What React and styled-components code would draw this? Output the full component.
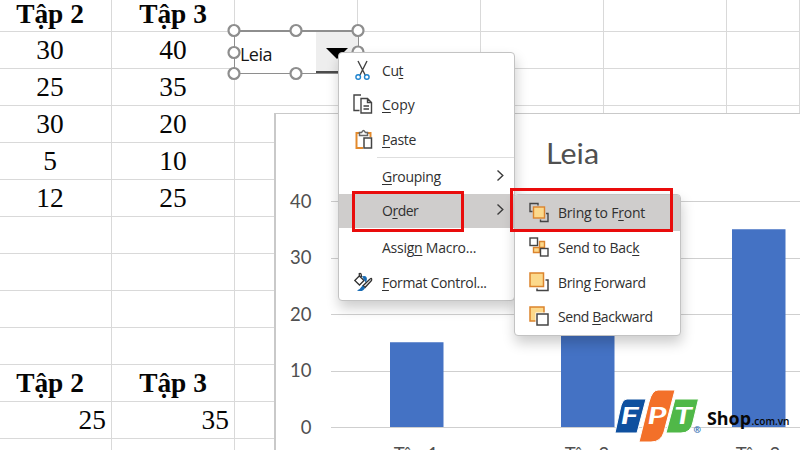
import React from "react";
import styled, { createGlobalStyle } from "styled-components";

const GlobalStyle = createGlobalStyle`
  body { margin: 0; background: #fff; overflow: hidden; }
  * { box-sizing: border-box; }
`;

const Screen = styled.main`
  position: relative;
  width: 800px;
  height: 450px;
  overflow: hidden;
  background: #fff;
`;

const Sheet = styled.div`
  display: grid;
  grid-template-columns: 112px repeat(5, 123px) 73px;
  grid-template-rows: 32px;
  grid-auto-rows: 37px;
`;

const Cell = styled.div`
  display: flex;
  align-items: center;
  justify-content: ${(p) => (p.$align === "right" ? "flex-end" : "center")};
  padding-right: ${(p) => p.$inset}px;
  padding-bottom: ${(p) => p.$lift}px;
  border-right: 1px solid #d9d9d9;
  border-bottom: 1px solid #d9d9d9;
  font-family: "Liberation Serif", serif;
  font-size: 27.4px;
  line-height: 27px;
  font-weight: ${(p) => (p.$bold ? 700 : 400)};
  color: #050505;
`;

const ComboBox = styled.div`
  position: absolute;
  left: 234px;
  top: 30px;
  width: 125px;
  height: 44px;
  display: flex;
  background: #fff;
  border: 1px solid #8e8e8e;
  border-top-width: 2px;
`;

const ComboValue = styled.span`
  flex: 1;
  padding-left: 5px;
  font: 18px/45px "Open Sans", sans-serif;
  letter-spacing: -0.55px;
  color: #161616;
`;

const ComboButton = styled.span`
  display: flex;
  width: 42px;
  justify-content: center;
  background: #eee;
  border-bottom: 2px solid #4c4c4c;
  svg { margin-top: 16px; }
`;

const Handles = styled.svg`
  position: absolute;
  left: 226px;
  top: 22px;
`;

const ChartFrame = styled.section`
  position: absolute;
  left: 274px;
  top: 113px;
  width: 540px;
  height: 350px;
  background: #fff;
  border: 1px solid #c9c9c9;
  border-width: 1px 0 0 2px;
  svg { display: block; }
`;

const Menu = styled.nav`
  position: absolute;
  left: ${(p) => p.$x}px;
  top: ${(p) => p.$y}px;
  width: ${(p) => p.$w}px;
  height: ${(p) => p.$h}px;
  display: flex;
  flex-direction: column;
  padding-top: ${(p) => p.$pad}px;
  background: #fff;
  border: 1px solid #c3c3c3;
  border-radius: 4px;
  overflow: hidden;
  box-shadow: 1px 7px 13px rgba(0, 0, 0, 0.2);
`;

const MenuItem = styled.div`
  display: grid;
  grid-template-columns: 43px 1fr 18px;
  align-items: center;
  flex: 0 0 ${(p) => p.$h}px;
  background: ${(p) => (p.$active ? "#cfcdcc" : "transparent")};
`;

const IconSlot = styled.span`
  display: flex;
  padding-left: 14px;
`;

const Label = styled.span`
  font: 14px/20px "Open Sans", sans-serif;
  letter-spacing: ${(p) => p.$track || 0}px;
  color: #303030;
  white-space: nowrap;
  u {
    text-decoration-thickness: 1px;
    text-underline-offset: 2px;
  }
`;

const Divider = styled.hr`
  flex: 0 0 1px;
  margin: 0 0 1px 38px;
  border: 0;
  background: #dedede;
`;

const Callout = styled.div`
  position: absolute;
  left: ${(p) => p.$x}px;
  top: ${(p) => p.$y}px;
  width: ${(p) => p.$w}px;
  height: ${(p) => p.$h}px;
  border: 3px solid #e90c0c;
`;

const Watermark = styled.svg`
  position: absolute;
  left: 610px;
  top: 385px;
`;

const CutIcon = () => (
  <svg width="22" height="22" fill="none" strokeWidth="1.4">
    <path d="M5 1 12.2 15M14 1 7 15" stroke="#444" />
    <circle cx="5.2" cy="17" r="2.3" stroke="#1f84cf" />
    <circle cx="13.8" cy="17" r="2.3" stroke="#1f84cf" />
  </svg>
);
const CopyIcon = () => (
  <svg width="22" height="22" fill="none" stroke="#444" strokeWidth="1.4">
    <path d="M6.5 16.5H1V1H8" />
    <path d="M8 4.5H14.5L18.5 8.5V19H8ZM14.5 4.5V8.5H18.5M10.5 12H16M10.5 15H16" />
  </svg>
);
const PasteIcon = () => (
  <svg width="22" height="22" fill="none" strokeWidth="1.5">
    <path d="M8 4H3.5V19H10M14 4H17.5V8" stroke="#e38a2d" strokeWidth="2" />
    <path d="M6.5 6.5V3.5H8.6Q10.5-.7 12.4 3.5H14.5V6.5Z" stroke="#666" fill="#fff" />
    <path d="M11 9H18.5V19H11Z" stroke="#444" fill="#fff" />
  </svg>
);
const FormatIcon = () => (
  <svg width="22" height="22" fill="none" strokeWidth="1.3">
    <path d="M7 3.2 1.8 8.5 6.5 13 11 8.5 6.3 4V1.5Q8.5.5 8.5 5" stroke="#333" />
    <path d="M10 4.8Q14.5 4 12.8 9.5L11.5 7.5Z" fill="#186bb4" stroke="#186bb4" />
    <path d="M18.5 8.5 12 15.5 10 13.8 16.5 7.5Q19.5 5 18.5 8.5Z" stroke="#333" fill="#eee" />
    <path d="M9.5 13.5 12 16Q10 20.5 4 18.5 7 17.5 9.5 13.5Z" fill="#186bb4" />
  </svg>
);
const paper = { fill: "#fcd98b", stroke: "#dc842d" };
const outline = { fill: "#fff", stroke: "#444" };
const FrontIcon = () => (
  <svg width="22" height="22" strokeWidth="1.4">
    <path d="M9 3.5V1.5H1V9.5H3.5M11.5 17.5V19.5H19V11.5H17" {...outline} fill="none" />
    <rect x="4.5" y="5" width="11" height="11" {...paper} />
  </svg>
);
const BackIcon = () => (
  <svg width="22" height="22" strokeWidth="1.4">
    <path d="M10.5 4.5H15.5V10.5H10.5V15.5H4.5V10.5H10.5Z" {...paper} />
    <rect x="1" y="1" width="7.5" height="7.5" {...outline} />
    <rect x="11.5" y="11.5" width="7.5" height="7.5" {...outline} />
  </svg>
);
const ForwardIcon = () => (
  <svg width="22" height="22" strokeWidth="1.5">
    <rect x="1" y="1" width="13.5" height="13.5" {...paper} />
    <path d="M8 16.5V18.5H19V8H16.5" {...outline} fill="none" />
  </svg>
);
const BackwardIcon = () => (
  <svg width="22" height="22" strokeWidth="1.5">
    <rect x="1" y="1" width="14" height="14" {...paper} />
    <rect x="6.5" y="6.5" width="14" height="14" fill="#fff" />
    <rect x="8" y="8" width="11" height="11" {...outline} />
  </svg>
);
const Chevron = () => (
  <svg width="9" height="14" fill="none" stroke="#3c3c3c" strokeWidth="1.4">
    <path d="M1.5 .5 6.8 5.5 1.5 10.5" />
  </svg>
);

const ROWS = [
  ["Tập 2", "Tập 3"],
  ["30", "40"],
  ["25", "35"],
  ["30", "20"],
  ["5", "10"],
  ["12", "25"],
  ["", ""],
  ["", ""],
  ["", ""],
  ["", ""],
  ["Tập 2", "Tập 3"],
  ["25", "35"],
  ["", ""],
];

const CONTEXT_ITEMS = [
  { pre: "Cu", key: "t", post: "", Icon: CutIcon, h: 34, track: -0.4 },
  { pre: "", key: "C", post: "opy", Icon: CopyIcon, h: 34, track: 0 },
  { pre: "", key: "P", post: "aste", Icon: PasteIcon, h: 35, track: -0.35 },
  { pre: "", key: "G", post: "rouping", h: 35, track: -0.3, more: true, ruled: true },
  { pre: "O", key: "r", post: "der", h: 34, track: -0.5, more: true, active: true },
  { pre: "Assig", key: "n", post: " Macro...", h: 39, track: -0.25 },
  { pre: "", key: "F", post: "ormat Control...", Icon: FormatIcon, h: 31, track: -0.33 },
];

const ORDER_ITEMS = [
  { pre: "Bring to F", key: "r", post: "ont", Icon: FrontIcon, h: 36, track: -0.22, active: true },
  { pre: "Send to Bac", key: "k", post: "", Icon: BackIcon, h: 34, track: -0.25 },
  { pre: "Bring ", key: "F", post: "orward", Icon: ForwardIcon, h: 35, track: -0.36 },
  { pre: "Send ", key: "B", post: "ackward", Icon: BackwardIcon, h: 34, track: -0.42 },
];

const Items = ({ items }) =>
  items.map(({ pre, key, post, Icon, h, track, more, active, ruled }) => (
    <React.Fragment key={pre + key + post}>
      {ruled && <Divider />}
      <MenuItem $h={h} $active={active}>
        <IconSlot>{Icon && <Icon />}</IconSlot>
        <Label $track={track}>
          {pre}
          <u>{key}</u>
          {post}
        </Label>
        {more && <Chevron />}
      </MenuItem>
    </React.Fragment>
  ));

const Chart = () => (
  <ChartFrame>
    <svg width="524" height="336" viewBox="276 114 524 336" fontFamily="Lato, sans-serif" fill="#505050">
      <text x="546" y="163.5" fontSize="29.5" textLength="53" lengthAdjust="spacingAndGlyphs">Leia</text>
      {[40, 30, 20, 10, 0].map((v) => {
        const y = 427.5 - v * 5.65;
        return (
          <g key={v}>
            <path d={`M331 ${Math.floor(y) + 0.5}H800`} stroke="#cfcfcf" />
            <text x="311.5" y={y + 6} fontSize="18.5" textAnchor="end">{v}</text>
          </g>
        );
      })}
      {[15, 30, 35].map((v, i) => (
        <g key={i}>
          <rect x={390 + i * 171} y={427 - v * 5.65} width="53.5" height={v * 5.65} fill="#4472c4" />
          <text x={416 + i * 171} y="461" fontSize="18.5" textAnchor="middle">{`Tập ${i + 1}`}</text>
        </g>
      ))}
    </svg>
  </ChartFrame>
);

const Logo = () => (
  <Watermark width="190" height="65" viewBox="610 385 190 65">
    <path d="M627 399H646L637 433H615L620 410Q622 399 627 399Z" fill="#0f509f" stroke="#fff" />
    <path d="M675 399H698.5L693 422Q691 433 681 433H666Z" fill="#50b848" stroke="#fff" />
    <path d="M658 390H675L664 432Q661 442 651 442H639L649 402Q652 390 658 390Z" fill="#f37029" stroke="#fff" />
    <g fill="#fff" fontFamily="Lato, sans-serif" fontWeight="700" fontStyle="italic" fontSize="22">
      <text x="620.5" y="424" textLength="18" lengthAdjust="spacingAndGlyphs">F</text>
      <text x="647.5" y="424" textLength="19" lengthAdjust="spacingAndGlyphs">P</text>
      <text x="674" y="424" textLength="18" lengthAdjust="spacingAndGlyphs">T</text>
    </g>
    <text x="693.5" y="433" fontFamily="Open Sans, sans-serif" fontWeight="700" fontSize="9" fill="#2768ad">®</text>
    <text x="707" y="425" fontFamily="Open Sans, sans-serif" fontWeight="700" fontSize="18.5" fill="#080808" textLength="44" lengthAdjust="spacingAndGlyphs">Shop</text>
    <text x="751.5" y="425" fontFamily="Open Sans, sans-serif" fontWeight="600" fontSize="11" fill="#080808" textLength="38" lengthAdjust="spacingAndGlyphs">.com.vn</text>
  </Watermark>
);

const cellInset = (row, col) => {
  if (row === 11) return 5;
  return col === 0 ? 11 : 0;
};

export default function App() {
  return (
    <Screen>
      <GlobalStyle />
      <Sheet>
        {ROWS.flatMap((row, r) =>
          [...row, "", "", "", "", ""].map((value, c) => (
            <Cell
              key={`${r}-${c}`}
              $bold={r === 0 || r === 10}
              $align={r === 11 ? "right" : "center"}
              $inset={cellInset(r, c)}
              $lift={r === 0 ? 3 : 0}
            >
              {value}
            </Cell>
          ))
        )}
      </Sheet>
      <Chart />
      <ComboBox>
        <ComboValue>Leia</ComboValue>
        <ComboButton>
          <svg width="22" height="12"><path d="M0 0H22L11 11Z" fill="#000" /></svg>
        </ComboButton>
      </ComboBox>
      <Handles width="142" height="62" viewBox="226 22 142 62" fill="#fff" stroke="#8e8e8e" strokeWidth="2.2">
        {[[234, 30.5], [296, 30.5], [358, 30.5], [234, 52.5], [358, 52], [234, 73.5], [296, 73.5]].map(([x, y]) => (
          <circle key={`${x}-${y}`} cx={x} cy={y} r="5.5" />
        ))}
      </Handles>
      <Menu $x={338} $y={52} $w={177} $h={249} $pad={1}>
        <Items items={CONTEXT_ITEMS} />
      </Menu>
      <Menu $x={514} $y={194} $w={167} $h={142} $pad={0}>
        <Items items={ORDER_ITEMS} />
      </Menu>
      <Callout $x={352} $y={191} $w={112} $h={41} />
      <Callout $x={510} $y={188} $w={163} $h={44} />
      <Logo />
    </Screen>
  );
}
